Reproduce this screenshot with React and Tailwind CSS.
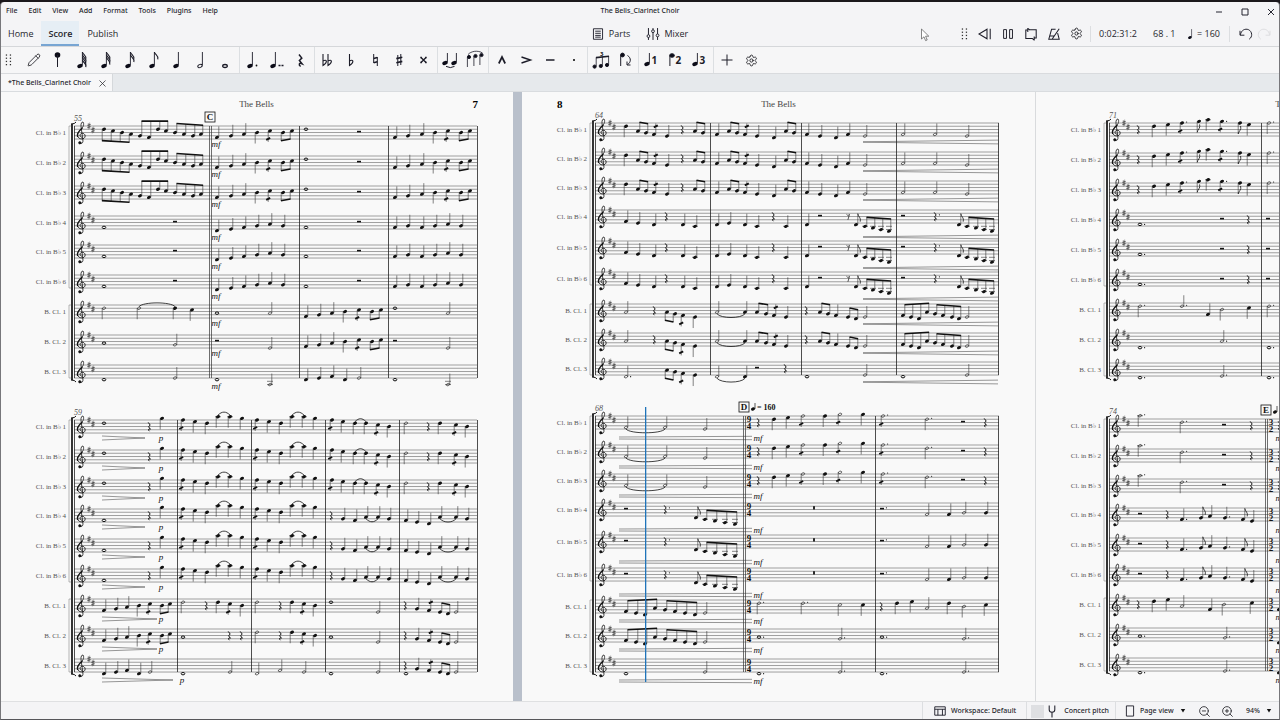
import { Pencil, Settings, X, ZoomIn, ZoomOut } from "lucide-react";

/* ================= SCORE DATA ================= */

// Staff strings: <kind><x>,<step><u|d>[t][.]
// kinds: q quarter, h half, w whole, e eighth, r/R/B/8 rests
// (u x,step ...) is a beamed group, s/S is a slur above/below, < and > are hairpins

const a1 = "(d 104,2 113,3 122,4 131,5) (u 140,6 149,7 158,2 166,3) (u 175,4 184,5 193,6 201,5) q217,7u q231,6u q244,5u q257,4d q270,3dt (d 283,4 292,3) w306,2 R359 q395,7u q408,6u q422,5u q435,4d q448,3dt (d 461,4 470,3) mf216,18";
const a4 = "w104,7 R175 q217,9u q231,8u q244,7u q257,6u q270,5u q283,6u w306,7 R359 q395,7u q408,6u q422,7u q435,6u q448,5u q461,6u mf216,21";
const a7 = "h104,2d h139,2d q175,2d q192,3d s139,175,1 w217,5 h270,5u q306,7u q319,6u q332,5u q345,4d q359,3dt (d 372,4 381,3) w395,2 h448,5u mf216,18";
const a8 = "w104,5 h175,6u R217 h270,8u q306,7u q319,6u q332,5u q345,4d q359,3dt (d 372,4 381,3) R395 h448,8u mf216,18";
const a9 = "w104,9 h175,8u w217,9 h270,12u q306,9u q319,8u q332,7u q345,9u h359,8u w395,9 h448,12u mf216,21";

const bMid = "q183,0dt q195,1d q207,2d q218,-2d q230,-2d s218,230,-3 q242,-1d q257,0dt q269,1d q281,2d q292,-2d q304,-2d s292,304,-3 q315,-1d";
const b1 = "w104,2 r149 q162,-1d >102,145,18 p161,18 " + bMid + " q332,0dt q343,1d q355,2d q366,2d s355,366,1 q378,3dt q389,4d h406,2d r428 q440,2d q456,3dt q467,4d";
const b4 = "w104,7 r149 q162,-1d >102,145,18 p161,18 " + bMid + " r331 q343,6u q355,7u q366,5u q378,5u S366,378,6 q389,6u q406,7u q417,8u q429,9u q440,5u q456,5u S440,456,6 q467,6u";
const bLow = "q104,7u q116,6u q127,5u q139,4d q150,3dt (d 162,4 170,3) >102,157,20 p161,20";
const bEnd = "r405 q417,6u q429,7ut (u 440,8 448,9) h456,8u";
const b7 = bLow + " h183,2d r206 q218,2d q230,3dt q242,4d h257,2d r280 q292,2d q304,3dt q315,4d w331,2 h378,8u " + bEnd;
const b8 = bLow + " w183,5 r229 r241 h257,2d r280 q292,2d q304,3dt q315,4d w331,5 h378,8u " + bEnd;
const b9 = "q104,9u q116,8u q127,7u q139,9u h150,8u >102,173,21 w183,9 h230,8u p182,21 h257,9u h280,7u h304,8u w331,9 h378,8u w406,9 " + bEnd;

const c1 = "q626,2d (u 638,5 646,6) q654,7ut q667,8u r682 (u 695,5 703,6) q717,7u (u 729,5 737,6) q745,7ut q757,8u q774,9u (u 786,5 794,6) q807,7u q820,8u q836,9u q848,7u h865,8u h903,7u h935,7u h967,8u <863,998,19";
const c4 = "q626,7u q638,8u q654,9u r666 q683,9u q695,10u q717,9u q729,8u q745,9u q757,10u r773 q786,10u q807,9u R820 8848 e856,9u (u 865,10 873,11 881,12 889,13) R903 r935. e959,9u (u 967,10 976,11 984,12 992,13) <863,998,27";
const c7 = "h626,5u r654 (d 667,5 675,6) q683,7dt q695,8d h717,5u q745,5u S717,745,6 (u 757,5 766,6) q774,7ut q786,8u r806 (u 820,5 828,6) q836,7u (u 848,8 856,9) h865,8u (u 903,7 911,8 919,9 927,5) (u 935,6 943,7 952,8 959,9) h967,8u <863,998,20";
const c9 = "h626,9u. (d 667,5 675,6) q683,7dt q695,8d h717,9u q745,9u S717,745,10 R757 r785 w807,9 h865,8u w903,9 h967,8u <863,998,20";

const d1 = "h626,7u h665,7u S626,665,8 h705,8u =619,752,22 mf758,22 r758 q774,2d q788,1d h803,0dt q825,0d h840,-1dt q863,-1d h883,0dt. h927,2d. R963 r985";
const d4 = "R626 r665. e696,9u (u 705,10 715,11 725,12 735,13) =619,752,27 mf758,27 B814 R882. h927,7u q949,7u h964,6u q986,6u";
const dRun = "(u 626,7 636,8 645,9 655,5) (u 665,6 675,7 685,8 695,9) h705,8u =619,752,21 mf758,21";
const d7 = dRun + " h759,2d. h803,2d. h840,3d q863,3d r881 q897,2d q912,1d h927,5u q949,2d h964,4d q986,3d";
const d8 = dRun + " w759,5. h840,6u. w882,5. h964,6u.";
const d9 = "w626,9 h705,8u =619,752,22 mf758,22 w759,9. h840,8u. w882,9. h964,8u.";

const e1 = "r1138 q1154,2d q1168,1d q1182,0dt. e1199,-1d q1208,-2d q1222,-1dt. e1240,0d q1249,1d h1269,0d.";
const e4 = "w1140,7. R1222 r1248 R1268";
const e7 = "h1140,2d. h1182,2u. q1208,7u h1222,4d q1249,3d h1269,2d.";
const e8 = "w1140,9. h1222,5u. w1269,9.";
const e9 = "w1140,9. h1222,8u. w1269,9.";

const f1 = "h1140,-2d. h1182,2d. R1224 r1251 r1279 mf1280,19";
const f4 = "R1140 r1167 q1182,7u. e1201,6u q1210,5u q1225,6u. e1243,7u q1252,8u mf1280,22";
const f7 = "r1138 q1154,2d q1168,1d h1182,5u q1210,7u h1224,4d q1252,3d q1279,7u mf1280,19";
const f8 = "w1140,5. h1225,6u. q1279,9u mf1280,22";
const f9 = "w1140,9. h1225,8u. q1279,9u mf1280,22";

const LABELS = ["Cl. in B♭ 1", "Cl. in B♭ 2", "Cl. in B♭ 3", "Cl. in B♭ 4", "Cl. in B♭ 5", "Cl. in B♭ 6", "B. Cl. 1", "B. Cl. 2", "B. Cl. 3"];

const PAGES = [
  {
    number: 7,
    left: 0,
    systems: [
      {
        measure: 55, left: 74, right: 477,
        tops: [126, 156, 186, 216, 245, 275, 305, 335, 365],
        bars: [299, 388, 477], double: 209, mark: ["C", 210],
        staves: [a1, a1, a1, a4, a4, a4, a7, a8, a9],
      },
      {
        measure: 59, left: 74, right: 477,
        tops: [420, 450, 480, 509, 539, 569, 599, 629, 659],
        bars: [177, 251, 325, 399, 477],
        staves: [b1, b1, b1, b4, b4, b4, b7, b8, b9],
      },
    ],
  },
  {
    number: 8,
    left: 522,
    systems: [
      {
        measure: 64, left: 595, right: 999,
        tops: [123, 152, 181, 210, 241, 272, 304, 333, 362],
        bars: [710, 801, 896, 998],
        staves: [c1, c1, c1, c4, c4, c4, c7, c7, c9],
      },
      {
        measure: 68, left: 595, right: 999,
        tops: [416, 445, 474, 503, 535, 568, 600, 629, 659],
        bars: [875, 998], double: 743, mark: ["D", 744], meter: ["9", "4", 749], tempo: 160,
        cursor: 645,
        staves: [d1, d1, d1, d4, d4, d4, d7, d8, d9],
      },
    ],
  },
  {
    number: null,
    left: 1036,
    systems: [
      {
        measure: 71, left: 1109, right: 1549,
        tops: [123, 153, 183, 213, 243, 273, 303, 333, 363],
        bars: [1261],
        staves: [e1, e1, e1, e4, e4, e4, e7, e8, e9],
      },
      {
        measure: 74, left: 1109, right: 1549,
        tops: [419, 449, 479, 508, 538, 568, 598, 628, 658],
        bars: [], double: 1265, mark: ["E", 1266], meter: ["3", "2", 1271], tempo: 160,
        staves: [f1, f1, f1, f4, f4, f4, f7, f8, f9],
      },
    ],
  },
];

/* ================= NOTATION ================= */

const STEP = 1.63;
const INK = "#111";

function Head({ x, y, kind }) {
  if (kind === "w") {
    return <ellipse cx={x} cy={y} rx="1.8" ry="1.2" fill="none" stroke={INK} strokeWidth="1" />;
  }
  const open = kind === "h";
  return (
    <ellipse
      cx={x}
      cy={y}
      rx={open ? 1.8 : 2.1}
      ry={open ? 1.1 : 1.5}
      transform={`rotate(-22 ${x} ${y})`}
      fill={open ? "none" : INK}
      stroke={open ? "#333" : "none"}
      strokeWidth="0.7"
    />
  );
}

function Ledgers({ x, top, step }) {
  const lines = [];
  for (let s = 10; s <= step; s += 2) lines.push(s);
  for (let s = -2; s >= step; s -= 2) lines.push(s);
  return lines.map((s) => (
    <line key={s} x1={x - 3} x2={x + 3} y1={top + s * STEP} y2={top + s * STEP} stroke="#333" strokeWidth="0.6" />
  ));
}

function Note({ kind, x, step, dir, tremolo, dot, top }) {
  const y = top + step * STEP;
  const up = dir === "u";
  const sx = up ? x + 1.8 : x - 1.8;
  const end = up ? y - 11 : y + 11;
  return (
    <g>
      <Ledgers x={x} top={top} step={step} />
      <Head x={x} y={y} kind={kind} />
      {kind !== "w" && <line x1={sx} x2={sx} y1={y} y2={end} stroke="#333" strokeWidth="0.6" />}
      {kind === "e" && (
        <path
          d={up ? `M${sx} ${end}c.3 3 3.6 4 2.4 8` : `M${sx} ${end}c.3 -3 3.6 -4 2.4 -8`}
          fill="none"
          stroke={INK}
          strokeWidth="0.8"
        />
      )}
      {tremolo && (
        <path
          d={`M${sx - 2} ${(up ? y - 8 : y + 8) + 1}l4 -2`}
          stroke={INK}
          strokeWidth="1.8"
        />
      )}
      {dot && <circle cx={x + 4.6} cy={y - (step % 2 === 0 ? 1 : 0)} r="0.6" fill={INK} />}
    </g>
  );
}

function Beam({ dir, notes, top }) {
  const up = dir === "u";
  const steps = notes.map((n) => n[1]);
  const first = notes[0];
  const last = notes[notes.length - 1];
  const extreme = up ? Math.min(...steps) : Math.max(...steps);
  // the beam stays level when an inner note is the closest to it
  const level = first[1] !== extreme && last[1] !== extreme;
  const slope = level ? 0 : Math.max(-1, Math.min(1, last[1] - first[1]));
  const edge = up ? extreme - 5 : extreme + 4.5;
  const off = up ? 1.8 : -1.8;
  const x1 = first[0] + off;
  const x2 = last[0] + off;
  const y1 = top + (edge - slope / 2) * STEP;
  const y2 = top + (edge + slope / 2) * STEP;
  return (
    <g>
      {notes.map(([x, step]) => {
        const sx = x + off;
        const y = top + step * STEP;
        const by = y1 + ((sx - x1) / (x2 - x1)) * (y2 - y1);
        return (
          <g key={x}>
            <Ledgers x={x} top={top} step={step} />
            <Head x={x} y={y} kind="q" />
            <line x1={sx} x2={sx} y1={y} y2={by} stroke="#333" strokeWidth="0.6" />
          </g>
        );
      })}
      <line x1={x1 - 0.3} x2={x2 + 0.3} y1={y1} y2={y2} stroke={INK} strokeWidth="1.6" />
    </g>
  );
}

function Rest({ kind, x, top, dot }) {
  const dotMark = dot && <circle cx={x + 4.4} cy={top + 4.8} r="0.6" fill={INK} />;
  if (kind === "r") {
    return (
      <g>
        <path
          d={`M${x - 0.8} ${top + 2.4}l2 2.6l-1.6 1.8l1.8 2.4c-2 -.8 -2.6 .6 -1 2`}
          fill="none"
          stroke={INK}
          strokeWidth="1"
        />
        {dotMark}
      </g>
    );
  }
  if (kind === "8") {
    return <path d={`M${x - 1.5} ${top + 4.4}c1 1.4 2.4 .8 3 0l-1.6 5.4`} fill="none" stroke={INK} strokeWidth="0.7" />;
  }
  if (kind === "B") {
    return <rect x={x - 0.9} y={top + 3.2} width="1.8" height="3.3" fill={INK} />;
  }
  return (
    <g>
      <rect x={x - 2} y={top + 4.8} width="4" height="1.6" fill={INK} />
      {dotMark}
    </g>
  );
}

function Staff({ top, left, right, music }) {
  const tokens = music.match(/\([^)]*\)|\S+/g);
  return (
    <g>
      {[0, 2, 4, 6, 8].map((s) => (
        <line key={s} x1={left} x2={right} y1={top + s * STEP} y2={top + s * STEP} stroke="#444" strokeWidth="0.5" />
      ))}
      <Clef x={left + 7} y={top} />
      <Sharp x={left + 15} y={top} />
      <Sharp x={left + 19} y={top + 4} />
      {tokens.map((token, i) => (
        <Token key={i} token={token} top={top} />
      ))}
    </g>
  );
}

function Token({ token, top }) {
  if (token[0] === "(") {
    const parts = token.slice(1, -1).split(" ");
    const notes = parts.slice(1).map((n) => n.split(",").map(Number));
    return <Beam dir={parts[0]} notes={notes} top={top} />;
  }

  const nums = token.match(/-?\d+/g).map(Number);

  if (token[0] === "m" || token[0] === "p") {
    return (
      <text x={nums[0]} y={top + nums[1] + 3} textAnchor="middle" fill={INK} className="text-[9px] italic">
        {token[0] === "m" ? "mf" : "p"}
      </text>
    );
  }
  if (token[0] === "s" || token[0] === "S") {
    const [x1, x2, step] = nums;
    const y = top + step * STEP;
    const bend = (token[0] === "s" ? -1 : 1) * Math.min(5, 3 + (x2 - x1) / 12);
    return <path d={`M${x1} ${y}C${x1 + 4} ${y + bend} ${x2 - 4} ${y + bend} ${x2} ${y}`} fill="none" stroke={INK} strokeWidth="0.8" />;
  }
  if ("<>=".includes(token[0])) {
    const [x1, x2, dy] = nums;
    const y = top + dy;
    const open1 = { "<": 0.2, ">": 2, "=": 1 }[token[0]];
    const open2 = { "<": 1.9, ">": 0, "=": 1.7 }[token[0]];
    return (
      <path
        d={`M${x1} ${y - open1}L${x2} ${y - open2}M${x1} ${y + open1}L${x2} ${y + open2}`}
        stroke="#333"
        strokeWidth="0.5"
      />
    );
  }
  if ("rRB".includes(token[0])) {
    return <Rest kind={token[0]} x={nums[0]} top={top} dot={token.endsWith(".")} />;
  }
  if (token[0] === "8") {
    return <Rest kind="8" x={Number(token.slice(1))} top={top} />;
  }
  return (
    <Note
      kind={token[0]}
      x={nums[0]}
      step={nums[1]}
      dir={token.includes("u") ? "u" : "d"}
      tremolo={token.includes("t")}
      dot={token.endsWith(".")}
      top={top}
    />
  );
}

function Clef({ x, y }) {
  return (
    <g transform={`translate(${x} ${y})`} fill="none" stroke={INK} strokeLinecap="round">
      <path strokeWidth="0.8" d="M-.8 17.6C1.6 18 2.2 16 1.9 14L0 .5C-.4-2.4 1-4.4 2-4C3.4-2 2.4 1 0 3.4" />
      <path strokeWidth="1.4" d="M1 2.2C-2.6 5.4-4.2 7.6-3.4 10.4" />
      <path strokeWidth="0.9" d="M-3.4 10.4C-2 14 3.6 13.6 4.1 10.4C4.4 7.2.4 6.4-.7 8.4C-1.4 9.8-.6 10.8.5 11.2" />
      <circle cx="-1.2" cy="16.8" r="1.2" fill={INK} strokeWidth="0.6" />
    </g>
  );
}

function Sharp({ x, y }) {
  return (
    <g transform={`translate(${x} ${y})`} stroke="#222">
      <path strokeWidth="0.4" d="M-.7-3V3.4M.7-3.4V3" />
      <path strokeWidth="0.8" d="M-1.5-.7L1.5-1.5M-1.5 1.5L1.5.7" />
    </g>
  );
}

function System({ measure, left, right, tops, bars, double, mark, meter, tempo, cursor, staves }) {
  const top = tops[0];
  const bottom = tops[8] + 13;
  const bx = left - 2;
  return (
    <g>
      <text x={left} y={top - 5} className="text-[8px] italic" fill="#555">
        {measure}
      </text>
      {LABELS.map((label, i) => (
        <text key={label} x={left - 8} y={tops[i] + 9} textAnchor="end" className="text-[7px]" fill="#555">
          {label}
        </text>
      ))}
      <path
        d={`M${bx - 1} ${top}h-2V${tops[5] + 13}h2M${bx - 1} ${tops[6]}h-2V${bottom}h2`}
        fill="none"
        stroke="#888"
        strokeWidth="0.6"
      />
      <line x1={bx} x2={bx} y1={top - 2} y2={bottom + 2} stroke={INK} strokeWidth="1.7" />
      <path
        d={`M${bx - 1} ${top - 2}q4 0 5 -2M${bx - 1} ${bottom + 2}q4 0 5 2`}
        fill="none"
        stroke={INK}
        strokeWidth="1"
      />
      {staves.map((music, i) => (
        <Staff key={i} top={tops[i]} left={left} right={right} music={music} />
      ))}
      {[left, ...bars].map((x) => (
        <line key={x} x1={x + 0.5} x2={x + 0.5} y1={top} y2={bottom} stroke="#222" strokeWidth="0.8" />
      ))}
      {double && (
        <path d={`M${double + 0.5} ${top}V${bottom}M${double + 2.5} ${top}V${bottom}`} stroke="#333" strokeWidth="0.7" />
      )}
      {meter &&
        tops.map((t) => (
          <g key={t} className="text-[9px] font-bold" fill={INK} textAnchor="middle">
            <text x={meter[2]} y={t + 6}>{meter[0]}</text>
            <text x={meter[2]} y={t + 13}>{meter[1]}</text>
          </g>
        ))}
      {mark && (
        <g>
          <rect x={mark[1] - 5} y={top - 14} width="10" height="10" fill="#f9f9f9" stroke={INK} strokeWidth="0.8" />
          <text x={mark[1]} y={top - 6} textAnchor="middle" className="text-[9px] font-bold" fill={INK}>
            {mark[0]}
          </text>
        </g>
      )}
      {tempo && (
        <g>
          <Head x={mark[1] + 9} y={top - 7} kind="q" />
          <line x1={mark[1] + 11} x2={mark[1] + 11} y1={top - 7} y2={top - 13} stroke={INK} strokeWidth="0.7" />
          <text x={mark[1] + 13} y={top - 6} className="text-[8px] font-bold" fill={INK}>
            = {tempo}
          </text>
        </g>
      )}
      {cursor && <rect x={cursor} y={top - 9} width="1.3" height={bottom - top + 19} fill="#1f74ba" />}
    </g>
  );
}

function Page({ number, left, systems }) {
  const even = number === 8;
  return (
    <section className="w-[513px] shrink-0 bg-[#f9f9f9] font-['Liberation_Serif',serif]">
      <header className="grid h-[18px] grid-cols-[1fr_auto_1fr] items-center px-[35px] pt-1.5 leading-3 text-[#444]">
        <span className="text-[11px] font-bold text-black">{even && number}</span>
        <h2 className="text-[9px]">The Bells</h2>
        <span className="text-right text-[11px] font-bold text-black">{!even && number}</span>
      </header>
      <svg width="513" height="590" viewBox={`${left} 110 513 590`}>
        {systems.map((system) => (
          <System key={system.measure} {...system} />
        ))}
      </svg>
    </section>
  );
}

/* ================= TOOLBAR ICONS ================= */

function Icon({ children, className = "size-5" }) {
  return (
    <svg viewBox="0 0 20 20" className={className} fill="none" stroke="#1c1c28" strokeWidth="1" aria-hidden="true">
      {children}
    </svg>
  );
}

function Stemmed({ x = 8, y = 16, open = false, flags = 0, top = 2 }) {
  return (
    <g>
      <ellipse
        cx={x}
        cy={y}
        rx={open ? 2.3 : 2.8}
        ry={open ? 1.5 : 2}
        transform={`rotate(-22 ${x} ${y})`}
        fill={open ? "none" : "#0c0c18"}
        stroke={open ? "#1c1c28" : "none"}
      />
      <path d={`M${x + 2.4} ${y - 0.5}V${top}`} strokeWidth="0.9" />
      {Array.from({ length: flags }).map((_, i) => (
        <path key={i} d={`M${x + 2.4} ${top + i * 2.6}c.4 2.8 4.6 3.4 3.4 7.4`} strokeWidth="1.1" />
      ))}
    </g>
  );
}

function Digit({ x, children }) {
  return (
    <text x={x} y="13.5" stroke="none" fill="#1c1c28" className="text-[10px] font-bold">
      {children}
    </text>
  );
}

function Grip() {
  return (
    <Icon className="size-4">
      {[4, 8, 12, 16].map((y) => (
        <g key={y} fill="#333" stroke="none">
          <rect x="6" y={y - 1} width="1.6" height="1.6" />
          <rect x="11" y={y - 1} width="1.6" height="1.6" />
        </g>
      ))}
    </Icon>
  );
}

const gear = <Settings size={13} strokeWidth={1.7} />;
const flat = (x) => <path d={`M${x} 4V15.5C${x + 5} 12.5 ${x + 4} 8.5 ${x} 11`} strokeWidth="1.1" />;

const TOOLS = [
  [
    ["Note input", <Pencil size={14} strokeWidth={1.5} />],
    ["Input by pitch", <Icon><circle cx="9.5" cy="5" r="2.8" fill="#0c0c18" stroke="none" /><path d="M9.5 5V17" /></Icon>],
    ["64th note", <Icon><Stemmed flags={4} /></Icon>],
    ["32nd note", <Icon><Stemmed flags={3} /></Icon>],
    ["16th note", <Icon><Stemmed flags={2} /></Icon>],
    ["Eighth note", <Icon><Stemmed flags={1} /></Icon>],
    ["Quarter note", <Icon><Stemmed /></Icon>],
    ["Half note", <Icon><Stemmed open /></Icon>],
    ["Whole note", <Icon><ellipse cx="9" cy="16" rx="2.3" ry="1.5" strokeWidth="1.3" /></Icon>],
  ],
  [
    ["Augmentation dot", <Icon><Stemmed x={7} /><circle cx="13.5" cy="15.5" r=".9" fill="#111" stroke="none" /></Icon>],
    ["Double dot", <Icon><Stemmed x={6} /><path d="M11.5 15.5h2M14.5 15.5h2" strokeWidth="1.6" /></Icon>],
    ["Rest", <Icon><path d="M8 4.5l2.8 3.6l-2.4 2.4l2.6 3.2c-3-1.2-3.6 1-1.4 2.8" strokeWidth="1.5" /></Icon>],
  ],
  [
    ["Double flat", <Icon>{flat(5)}{flat(10)}</Icon>],
    ["Flat", <Icon>{flat(7.5)}</Icon>],
    ["Natural", <Icon><path d="M7.7 4V13M11.3 7V16" /><path d="M7.7 8.5L11.3 7.5M7.7 12.8L11.3 11.8" strokeWidth="1.6" /></Icon>],
    ["Sharp", <Icon><path d="M7.8 5V16M10.8 4V15" /><path d="M6.3 8.6L12.3 7.2M6.3 12.8L12.3 11.4" strokeWidth="1.6" /></Icon>],
    ["Double sharp", <Icon><path d="M7 7.5L12 12.5M12 7.5L7 12.5" strokeWidth="1.4" /><path d="M6.3 7.5h1.6M11.1 7.5h1.6M6.3 12.5h1.6M11.1 12.5h1.6" strokeWidth="1.4" /></Icon>],
  ],
  [
    ["Tie", <Icon><Stemmed x={4} y={13} top={3} /><Stemmed x={13} y={13} top={3} /><path d="M5 16.4q4.5 2.4 8.5 0" /></Icon>],
    ["Slur", <Icon><g fill="#0c0c18"><circle cx="4" cy="7" r="1.6" /><circle cx="10.5" cy="6" r="1.6" /><circle cx="16.5" cy="5" r="1.6" /></g><path d="M2.4 7V17M8.9 6V16M14.9 5V15M3 4.6C6 1 13 0 17.5 3" strokeWidth="0.8" /></Icon>],
  ],
  [
    ["Marcato", <Icon><path d="M6.8 13.5L10 7L13.2 13.5" strokeWidth="1.7" /></Icon>],
    ["Accent", <Icon><path d="M5.5 7L14.5 10L5.5 13" strokeWidth="1.4" /></Icon>],
    ["Tenuto", <Icon><path d="M6 10H14.5" strokeWidth="1.6" /></Icon>],
    ["Staccato", <Icon><circle cx="10" cy="10" r="1.1" fill="#111" stroke="none" /></Icon>],
  ],
  [
    ["Tuplet", <Icon><g fill="#0c0c18"><circle cx="3.6" cy="16.6" r="1.6" /><circle cx="9.8" cy="16" r="1.6" /><circle cx="16" cy="15" r="1.6" /></g><path d="M5.2 16V7.4M11.4 15.6V6.8M17.6 15V6" strokeWidth="0.8" /><path d="M5 7.6L18 6.2" strokeWidth="1.6" /><text x="9" y="5.5" stroke="none" fill="#111" className="text-[6px] font-bold">3</text></Icon>],
    ["Flip direction", <Icon><circle cx="7.5" cy="5" r="1.9" fill="#0c0c18" /><path d="M5.7 5V16M12.5 5.5C16.5 8 16 12.5 12.5 14.5M12 11.5V15h3.5" /></Icon>],
  ],
  [
    ["Voice 1", <Icon><Stemmed x={5} y={14} top={3} /><Digit x={9.5}>1</Digit></Icon>],
    ["Voice 2", <Icon><ellipse cx="6" cy="5.5" rx="2.4" ry="1.8" fill="#0c0c18" /><path d="M3.9 6V16" /><Digit x={9.5}>2</Digit></Icon>],
    ["Voice 3", <Icon><Stemmed x={5} y={14} top={3} /><Digit x={9.5}>3</Digit></Icon>],
  ],
  [
    ["Add", <Icon><path d="M10 4.5V15.5M4.5 10H15.5" /></Icon>],
    ["Customize toolbar", gear],
  ],
];

const TRANSPORT = [
  ["Rewind", <Icon className="size-4"><path d="M12.5 4V16L2.5 10ZM16.5 3.5V16.5" strokeWidth="1.3" /></Icon>],
  ["Pause", <Icon className="size-4"><path d="M4.5 4.5h3.6v11H4.5ZM12 4.5h3.6v11H12Z" strokeWidth="1.2" /></Icon>],
  ["Loop", <Icon className="size-4"><path d="M6 5H3.5V15.5H12M8 4.8H16.5V15H14.5M6 2.5V7.5M14 13V18M8.5 5L6 3M11.5 15.5L14 17.8" strokeWidth="1.3" /></Icon>],
  ["Metronome", <Icon className="size-4"><path d="M12 4H7L3.5 16.5H16.5L14.5 9M8 16L16.5 3.5M5 12.5H10" strokeWidth="1.3" /></Icon>],
  ["Playback settings", gear],
];

/* ================= APP SECTIONS ================= */

function TitleBar() {
  return (
    <div className="grid h-[19px] grid-cols-[1fr_auto_1fr] items-center text-[7px] font-medium">
      <nav className="flex gap-[11px] pl-[5px]">
        {["File", "Edit", "View", "Add", "Format", "Tools", "Plugins", "Help"].map((item) => (
          <button key={item}>{item}</button>
        ))}
      </nav>
      <h1>The Bells_Clarinet Choir</h1>
      <div className="flex justify-end gap-3.5 pr-0.5">
        <button aria-label="Minimize"><Icon className="size-3"><path d="M5 10H15" strokeWidth="1.6" /></Icon></button>
        <button aria-label="Maximize"><Icon className="size-3"><path d="M5 5H15V15H5Z" strokeWidth="1.6" /></Icon></button>
        <button aria-label="Close"><Icon className="size-3"><path d="M5 5L15 15M15 5L5 15" strokeWidth="1.6" /></Icon></button>
      </div>
    </div>
  );
}

function MainBar() {
  return (
    <div className="-ml-px grid h-[26px] grid-cols-[1fr_auto_1fr] border-b border-[#d5d7da] font-['Open_Sans',sans-serif] text-[9px]">
      <nav className="flex">
        <button className="px-2">Home</button>
        <button className="border-b-2 border-[#77a5d3] bg-[#e6eef5] px-[7px] pt-0.5 font-semibold">Score</button>
        <button className="px-2">Publish</button>
      </nav>
      <div className="flex items-center gap-4">
        <button className="flex items-center gap-1">
          <Icon className="size-3.5"><path d="M3.5 2.5H16.5V17.5H3.5ZM6 6H14M6 9H14M6 12H14M6 14.5H14" strokeWidth="1.3" /></Icon>
          Parts
        </button>
        <button className="flex items-center gap-1">
          <Icon className="size-3.5"><path d="M3.5 1.5V11M3.5 15V18.5M10 1.5V4M10 8V18.5M16.5 1.5V10M16.5 14V18.5" strokeWidth="1.4" /><circle cx="3.5" cy="13" r="2" strokeWidth="1.3" /><circle cx="10" cy="6" r="2" strokeWidth="1.3" /><circle cx="16.5" cy="12" r="2" strokeWidth="1.3" /></Icon>
          Mixer
        </button>
      </div>
      <div className="flex items-center justify-end pr-[7px]">
        <Grip />
        {TRANSPORT.map(([label, icon]) => (
          <button key={label} aria-label={label} className="flex w-[23px] justify-center">
            {icon}
          </button>
        ))}
        <span className="ml-0.5 h-4 w-px bg-[#dcdee1]" />
        <span className="ml-2 w-[54px]">0:02:31:2</span>
        <span className="w-8">68 . 1</span>
        <span className="flex w-11 items-center">
          <Icon className="-mr-0.5 size-3.5 shrink-0"><Stemmed x={7} y={15} top={3} /></Icon>
          <span className="whitespace-nowrap">= 160</span>
        </span>
        <span className="h-4 w-px bg-[#dcdee1]" />
        <button aria-label="Undo" className="ml-1.5 flex w-5 justify-center">
          <Icon className="size-4"><path d="M2.5 6V11.5H8M3 11C4 5 9 3 13 4.5C18 7 18.5 13.5 14 16.5" strokeWidth="1.2" /></Icon>
        </button>
        <button aria-label="Redo" className="flex w-4 justify-center opacity-10">
          <Icon className="size-4"><path d="M17.5 6V11.5H12M17 11C16 5 11 3 7 4.5C2 7 1.5 13.5 6 16.5" strokeWidth="1.2" /></Icon>
        </button>
      </div>
    </div>
  );
}

function NoteToolbar() {
  return (
    <div className="flex h-[27px] items-center border-b border-[#d9dbde] bg-[#f6f6f7]">
      <span className="flex w-[21px]">
        <Grip />
      </span>
      {TOOLS.map((group, i) => (
        <div key={i} className="flex h-full items-center">
          {i > 0 && <span className="mx-px h-full w-px bg-[#dcdfe2]" />}
          {group.map(([label, icon]) => (
            <button key={label} aria-label={label} className="flex w-6 justify-center">
              {icon}
            </button>
          ))}
        </div>
      ))}
    </div>
  );
}

function TabStrip() {
  return (
    <div className="flex h-[18px] border-b border-[#d9dcdf] bg-[#e6e9ec]">
      <div className="flex items-center gap-1.5 border-r border-[#d5d8db] bg-[#f7f7f8] pt-px pr-1 pl-[7px] text-[7px] font-medium">
        <span>*The Bells_Clarinet Choir</span>
        <button aria-label="Close tab">
          <X size={11} strokeWidth={1.6} />
        </button>
      </div>
    </div>
  );
}

function Picker({ label, value }) {
  return (
    <label className="flex items-center gap-1.5">
      <select aria-label={label} className="appearance-none bg-transparent">
        <option>{value}</option>
      </select>
      <svg viewBox="0 0 6 6" className="size-1.5" aria-hidden="true">
        <path d="M.8 1H5.2L3 4.6Z" fill="#111" />
      </svg>
    </label>
  );
}

function StatusBar() {
  return (
    <footer className="flex h-[18px] shrink-0 items-stretch justify-end border-t border-[#dfe0e2] bg-[#f4f4f6] text-[7px] font-medium">
      <button className="flex items-center gap-1 border-l border-[#dcdee1] px-2.5 pt-px">
        <Icon className="size-3.5"><path d="M2.5 4H17.5V16H2.5ZM2.5 7.5H17.5M7 7.5V16M13.5 7.5V16" strokeWidth="1.3" /></Icon>
        Workspace: Default
      </button>
      <label className="flex items-center border-l border-[#dcdee1] pt-px pr-1.5 pl-1">
        <input type="checkbox" className="size-[13px] appearance-none bg-[#dedfe2]" />
        <Icon className="size-4"><path d="M6.5 3V8.5Q6.5 11.5 10 11.5Q13.5 11.5 13.5 8.5V3M10 11.5V18" strokeWidth="1.3" /></Icon>
        <span className="ml-1">Concert pitch</span>
      </label>
      <div className="flex items-center gap-1 border-l border-[#dcdee1] pt-px pl-2">
        <Icon className="size-3"><path d="M4 1.5H16V18.5H4Z" strokeWidth="1.5" /></Icon>
        <Picker label="View mode" value="Page view" />
      </div>
      <button aria-label="Zoom out" className="ml-3 pt-px">
        <ZoomOut size={13} strokeWidth={1.6} />
      </button>
      <button aria-label="Zoom in" className="ml-2.5 pt-px">
        <ZoomIn size={13} strokeWidth={1.6} />
      </button>
      <div className="ml-3 flex items-center pt-px pr-[7px]">
        <Picker label="Zoom level" value="94%" />
      </div>
    </footer>
  );
}

export default function App() {
  return (
    <div className="h-screen bg-[#1b181c] pt-0.5 font-['Noto_Sans','Open_Sans',sans-serif] text-[#26262c]">
      <div className="relative flex h-full flex-col overflow-hidden rounded-t border-x border-b border-x-[#77777b] border-b-[#55555a] bg-[#f4f4f6]">
        <TitleBar />
        <MainBar />
        <NoteToolbar />
        <TabStrip />
        <main className="-ml-px flex min-h-0 flex-1 overflow-hidden bg-[#f9f9f9]">
          <Page {...PAGES[0]} />
          <div className="w-[9px] shrink-0 bg-[#b9c0cb]" />
          <Page {...PAGES[1]} />
          <div className="w-px shrink-0 bg-[#d9dbdd]" />
          <Page {...PAGES[2]} />
        </main>
        <StatusBar />
        <svg viewBox="0 0 10 14" className="absolute top-[26px] right-[349px] h-3.5 w-2.5" aria-hidden="true">
          <path d="M1.5 1V11L4 8.8L5.6 12.6L7.2 12L5.6 8.2H8.8Z" fill="#fff" stroke="#555" strokeWidth="0.7" />
        </svg>
      </div>
    </div>
  );
}
